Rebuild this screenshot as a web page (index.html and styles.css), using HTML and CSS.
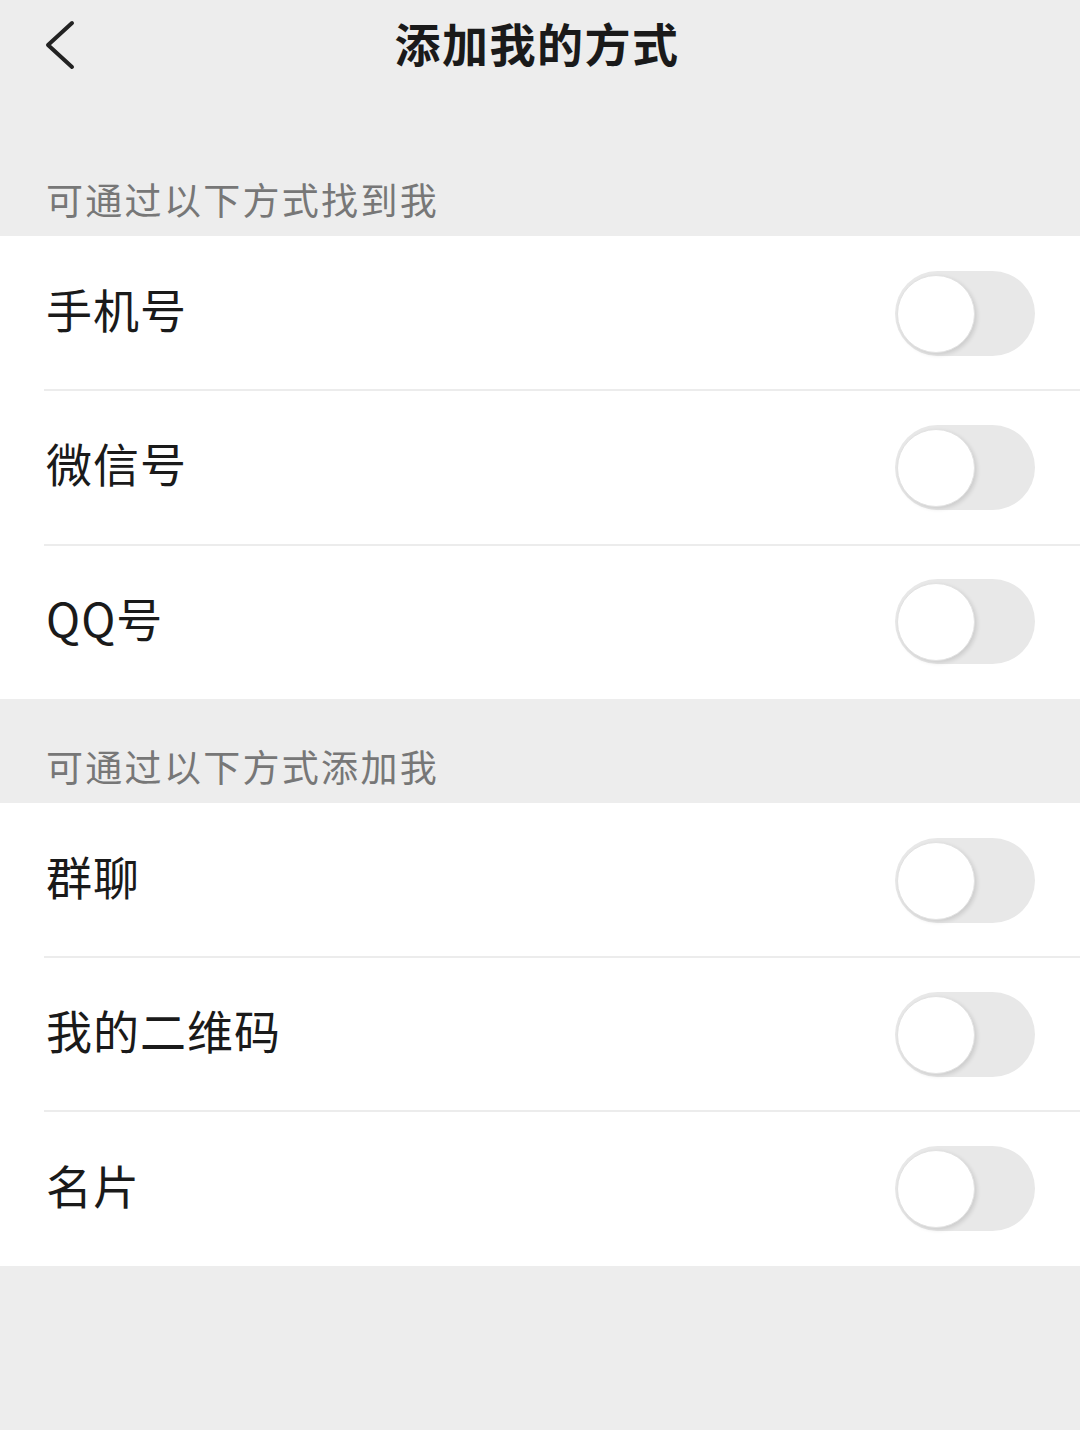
FILE: index.html
```html
<!DOCTYPE html>
<html lang="zh-CN">
<head>
<meta charset="utf-8">
<link rel="stylesheet" href="styles.css">
</head>
<body>
<div class="page">
  <header class="nav">
    <svg class="back" width="40" height="50" viewBox="0 0 40 50">
      <polyline points="28,3 4,25 28,47" fill="none" stroke="#222" stroke-width="4" stroke-linecap="round" stroke-linejoin="round"/>
    </svg>
    <h1 class="title">添加我的方式</h1>
  </header>

  <div class="section-label first">可通过以下方式找到我</div>
  <div class="group">
    <div class="row"><span class="row-text">手机号</span><span class="toggle"><span class="knob"></span></span></div>
    <div class="row"><span class="row-text">微信号</span><span class="toggle"><span class="knob"></span></span></div>
    <div class="row"><span class="row-text">QQ号</span><span class="toggle"><span class="knob"></span></span></div>
  </div>

  <div class="section-label">可通过以下方式添加我</div>
  <div class="group">
    <div class="row"><span class="row-text">群聊</span><span class="toggle"><span class="knob"></span></span></div>
    <div class="row"><span class="row-text">我的二维码</span><span class="toggle"><span class="knob"></span></span></div>
    <div class="row"><span class="row-text">名片</span><span class="toggle"><span class="knob"></span></span></div>
  </div>
</div>
</body>
</html>
```

FILE: styles.css
```css
* { box-sizing: border-box; margin: 0; padding: 0; }
html, body {
  background: #ededed;
  width: 1080px;
  height: 1430px;
  overflow: hidden;
}
body {
  font-family: "Noto Sans CJK SC", "Noto Sans", sans-serif;
  color: #1a1a1a;
}
.page { display: flex; flex-direction: column; }
.nav {
  position: relative;
  height: 90px;
  display: flex;
  align-items: center;
  justify-content: center;
  padding-bottom: 6px;
}
.back {
  position: absolute;
  left: 44px;
  top: 20px;
}
.title {
  font-size: 46px;
  font-weight: 700;
  color: #1a1a1a;
  letter-spacing: 1.5px;
  line-height: 60px;
  margin-left: -6px;
}
.section-label {
  padding: 46px 0 16px 46px;
  font-size: 37px;
  line-height: 42px;
  color: #777;
  letter-spacing: 2.3px;
}
.section-label.first { padding-top: 88px; }
.group {
  background: #fff;
  display: flex;
  flex-direction: column;
}
.row {
  position: relative;
  height: 154.3px;
  display: flex;
  align-items: center;
  justify-content: space-between;
  padding: 0 45px 0 46px;
}
.row-text {
  font-size: 46px;
  line-height: 60px;
  color: #1a1a1a;
  letter-spacing: 1px;
  padding-bottom: 10px;
}
.row + .row::before {
  content: "";
  position: absolute;
  left: 44px;
  right: 0;
  top: -1px;
  height: 2px;
  background: #ececec;
}
.toggle {
  position: relative;
  width: 140px;
  height: 85px;
  border-radius: 43px;
  background: #e8e8e8;
}
.knob {
  position: absolute;
  left: 2px;
  top: 4px;
  width: 78px;
  height: 78px;
  border-radius: 50%;
  background: #fff;
  border: 1px solid #e2e2e2;
  box-shadow: 2px 2px 4px rgba(0,0,0,0.12);
}
```
